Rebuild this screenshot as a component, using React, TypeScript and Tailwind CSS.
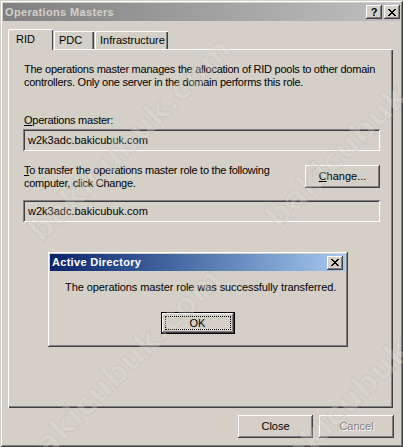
import React from "react";

const raised =
  "bg-[#d4d0c8] shadow-[inset_-1px_-1px_#404040,inset_1px_1px_#ffffff,inset_-2px_-2px_#808080,inset_2px_2px_#d4d0c8]";
const sunken =
  "bg-[#d4d0c8] shadow-[inset_1px_1px_#808080,inset_-1px_-1px_#ffffff,inset_2px_2px_#404040,inset_-2px_-2px_#d4d0c8]";

function Button({
  children,
  className = "",
  disabled = false,
}: {
  children: React.ReactNode;
  className?: string;
  disabled?: boolean;
}) {
  return (
    <div
      className={`${raised} flex items-center justify-center h-[23px] w-[75px] ${className} ${
        disabled ? "text-[#808080] [text-shadow:1px_1px_#ffffff]" : "text-black"
      }`}
    >
      {children}
    </div>
  );
}

function Field({ value }: { value: string }) {
  return (
    <div className={`${sunken} ml-[14px] w-[357px] h-[22px] flex items-center pl-[5px] text-black`}>
      {value}
    </div>
  );
}

function CloseGlyph() {
  return (
    <svg width="8" height="7" viewBox="0 0 8 7" shapeRendering="crispEdges">
      <path
        d="M0 0h2v1H0zM6 0h2v1H6zM1 1h2v1H1zM5 1h2v1H5zM2 2h4v1H2zM3 3h2v1H3zM2 4h4v1H2zM1 5h2v1H1zM5 5h2v1H5zM0 6h2v1H0zM6 6h2v1H6z"
        fill="#000"
      />
    </svg>
  );
}

function Watermark({ left, top }: { left: number; top: number }) {
  return (
    <span
      className="absolute -translate-x-1/2 -translate-y-1/2 -rotate-45 whitespace-nowrap font-['DejaVu_Sans',sans-serif] font-bold text-[32px] text-[#e2dfd9]/30 [-webkit-text-stroke:1px_rgba(170,165,155,0.25)]"
      style={{ left, top }}
    >
      bakicubuk.com
    </span>
  );
}

export default function App() {
  return (
    <div className="relative w-[403px] h-[447px] overflow-hidden bg-[#d4d0c8] font-['Liberation_Sans',Arial,sans-serif] text-[11px] leading-[13px] text-black shadow-[inset_1px_1px_#d4d0c8,inset_-1px_-1px_#404040,inset_2px_2px_#ffffff,inset_-2px_-2px_#808080]">
      <div className="flex flex-col">
        {/* Title bar (inactive) */}
        <div className="mt-[3px] mx-[3px] h-[18px] bg-gradient-to-r from-[#808080] to-[#c0c0c0] flex items-center justify-between pl-[2px]">
          <span className="font-bold text-[11px] text-[#d4d0c8] tracking-[0.35px]">Operations Masters</span>
          <div className="flex gap-[2px]">
            <div className={`${raised} w-[16px] h-[14px] flex items-center justify-center font-bold text-[11px] leading-none pt-[1px]`}>
              ?
            </div>
            <div className={`${raised} w-[16px] h-[14px] flex items-center justify-center`}>
              <CloseGlyph />
            </div>
          </div>
        </div>

        {/* Tabs */}
        <div className="flex items-end ml-[8px] mt-[8px] relative z-10">
          <div className="h-[21px] w-[45px] mb-[-1px] bg-[#d4d0c8] border-l border-t border-white rounded-tl-[2px] shadow-[inset_-1px_0_#404040] pl-[7px] pt-[3px]">
            RID
          </div>
          <div className="h-[18px] w-[40px] ml-[1px] border-l border-t border-white rounded-tl-[2px] shadow-[inset_-1px_0_#404040,inset_-2px_0_#808080] pl-[4px] pt-[2px]">
            PDC
          </div>
          <div className="h-[18px] w-[73px] ml-[1px] border-l border-t border-white rounded-tl-[2px] shadow-[inset_-1px_0_#404040,inset_-2px_0_#808080] pl-[4px] pt-[2px]">
            Infrastructure
          </div>
        </div>

        {/* Tab panel */}
        <div className="ml-[8px] w-[385px] h-[359px] border-l border-t border-white shadow-[inset_-1px_-1px_#404040,inset_-2px_-2px_#808080] flex flex-col">
          <p className="mt-[13px] ml-[15px] whitespace-nowrap tracking-[-0.25px]">
            The operations master manages the allocation of RID pools to other domain
            <br />
            controllers. Only one server in the domain performs this role.
          </p>
          <div className="mt-[25px] ml-[15px] tracking-[-0.25px]">
            <span className="underline underline-offset-1">O</span>perations master:
          </div>
          <div className="mt-[2px]">
            <Field value="w2k3adc.bakicubuk.com" />
          </div>
          <div className="mt-[13px] ml-[15px] w-[356px] flex justify-between items-start">
            <p className="whitespace-nowrap tracking-[-0.25px]">
              <span className="underline underline-offset-1">T</span>o transfer the operations master role to the following
              <br />
              computer, click Change.
            </p>
            <Button className="h-[22px] mt-[1px]">
              <span className="underline underline-offset-1">C</span>hange...
            </Button>
          </div>
          <div className="mt-[10px]">
            <Field value="w2k3adc.bakicubuk.com" />
          </div>
        </div>

        {/* Bottom buttons */}
        <div className="flex gap-[6px] ml-[238px] mt-[7px]">
          <Button>Close</Button>
          <Button disabled>Cancel</Button>
        </div>
      </div>

      {/* Active Directory message box */}
      <div className="absolute left-[47px] top-[251px] w-[301px] h-[96px] bg-[#d4d0c8] shadow-[inset_1px_1px_#d4d0c8,inset_-1px_-1px_#404040,inset_2px_2px_#ffffff,inset_-2px_-2px_#808080] flex flex-col">
        <div className="mt-[3px] mx-[3px] h-[17px] bg-gradient-to-r from-[#0a246a] to-[#a6caf0] flex items-center justify-between pl-[2px] pr-[2px]">
          <span className="font-bold text-[11px] text-white tracking-[0.3px]">Active Directory</span>
          <div className={`${raised} w-[16px] h-[14px] flex items-center justify-center`}>
            <CloseGlyph />
          </div>
        </div>
        <p className="mt-[10px] ml-[18px] whitespace-nowrap tracking-[-0.08px]">
          The operations master role was successfully transferred.
        </p>
        <div className="mt-[18px] flex justify-center">
          <div className="w-[74px] h-[22px] border border-black">
            <div className={`${raised} relative w-full h-full flex items-center justify-center`}>
              <div className="absolute inset-[3px] border border-dotted border-black" />
              OK
            </div>
          </div>
        </div>
      </div>

      {/* Watermark */}
      <div className="pointer-events-none absolute inset-0">
        <Watermark left={130} top={140} />
        <Watermark left={367} top={126} />
        <Watermark left={120} top={370} />
        <Watermark left={370} top={380} />
      </div>
    </div>
  );
}
